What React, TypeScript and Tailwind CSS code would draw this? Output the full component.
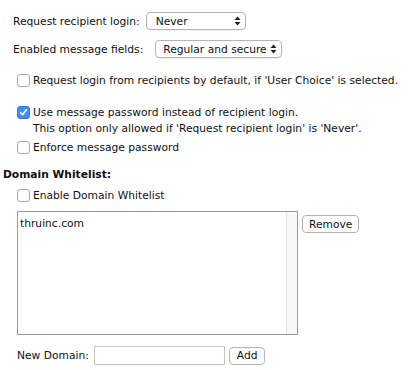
import React from "react";

function Box({ checked = false }: { checked?: boolean }) {
  return checked ? (
    <span className="w-[13px] h-[13px] rounded-[3px] bg-[#3b8ff5] border border-[#2f7de0] flex items-center justify-center shrink-0">
      <svg width="9" height="9" viewBox="0 0 9 9">
        <path d="M1.6 4.8 L3.6 6.8 L7.4 1.8" fill="none" stroke="#fff" strokeWidth="1.6" strokeLinecap="round" strokeLinejoin="round" />
      </svg>
    </span>
  ) : (
    <span className="w-[13px] h-[13px] rounded-[3px] bg-white border border-[#a8a8a8] shrink-0" />
  );
}

function Arrows() {
  return (
    <svg width="7" height="10" viewBox="0 0 7 10" className="shrink-0">
      <path d="M0.5 4 L3.5 0.5 L6.5 4 Z" fill="#222" />
      <path d="M0.5 6 L3.5 9.5 L6.5 6 Z" fill="#222" />
    </svg>
  );
}

function Select({ value, w, pl }: { value: string; w: string; pl: string }) {
  return (
    <div className={`${w} ${pl} h-[18px] rounded-[4px] border border-[#b4b4b4] bg-white flex items-center justify-between pr-[4px] whitespace-nowrap shadow-[0_1px_0_rgba(0,0,0,0.05)]`}>
      <span>{value}</span>
      <Arrows />
    </div>
  );
}

export default function App() {
  return (
    <div
      className="w-[414px] h-[370px] bg-white text-[#111] text-[10.7px] leading-[13px]"
      style={{ fontFamily: "'DejaVu Sans', Verdana, sans-serif" }}
    >
      <div className="pt-[12px] pl-[13px] flex items-center">
        <span>Request recipient login:</span>
        <div className="ml-[6px]">
          <Select value="Never" w="w-[100px]" pl="pl-[9px]" />
        </div>
      </div>
      <div className="pt-[10px] pl-[13px] flex items-center">
        <span>Enabled message fields:</span>
        <div className="ml-[12px]">
          <Select value="Regular and secure" w="w-[127px]" pl="pl-[7px]" />
        </div>
      </div>

      <div className="pt-[16px] pl-[17px] flex items-center gap-[3px]">
        <Box />
        <span>Request login from recipients by default, if 'User Choice' is selected.</span>
      </div>

      <div className="pt-[19px] pl-[17px]">
        <div className="flex items-center gap-[3px]">
          <Box checked />
          <span>Use message password instead of recipient login.</span>
        </div>
        <div className="pl-[16px] pt-[3px]">This option only allowed if 'Request recipient login' is 'Never'.</div>
      </div>
      <div className="pt-[6px] pl-[17px] flex items-center gap-[3px]">
        <Box />
        <span>Enforce message password</span>
      </div>

      <div className="pt-[14px] pl-[3px] font-bold">Domain Whitelist:</div>
      <div className="pt-[8px] pl-[17px] flex items-center gap-[3px]">
        <Box />
        <span>Enable Domain Whitelist</span>
      </div>

      <div className="pt-[9px] pl-[17px] flex items-start">
        <div className="w-[281px] h-[124px] border border-[#9a9a9a] bg-white flex">
          <div className="flex-1 pl-[2px] pt-[5px]">thruinc.com</div>
          <div className="w-[11px] h-full bg-[#f7f7f7] border-l border-[#e3e3e3]" />
        </div>
        <button className="ml-[4px] mt-[4px] h-[18px] px-[6px] rounded-[4px] border border-[#b4b4b4] bg-white text-[10.7px] leading-[13px]">
          Remove
        </button>
      </div>

      <div className="pt-[11px] pl-[17px] flex items-center">
        <span>New Domain:</span>
        <div className="ml-[5px] w-[131px] h-[19px] border border-[#c4c4c4] bg-white" />
        <button className="ml-[4px] h-[18px] px-[7px] rounded-[4px] border border-[#b4b4b4] bg-white text-[10.7px] leading-[13px]">
          Add
        </button>
      </div>
    </div>
  );
}
